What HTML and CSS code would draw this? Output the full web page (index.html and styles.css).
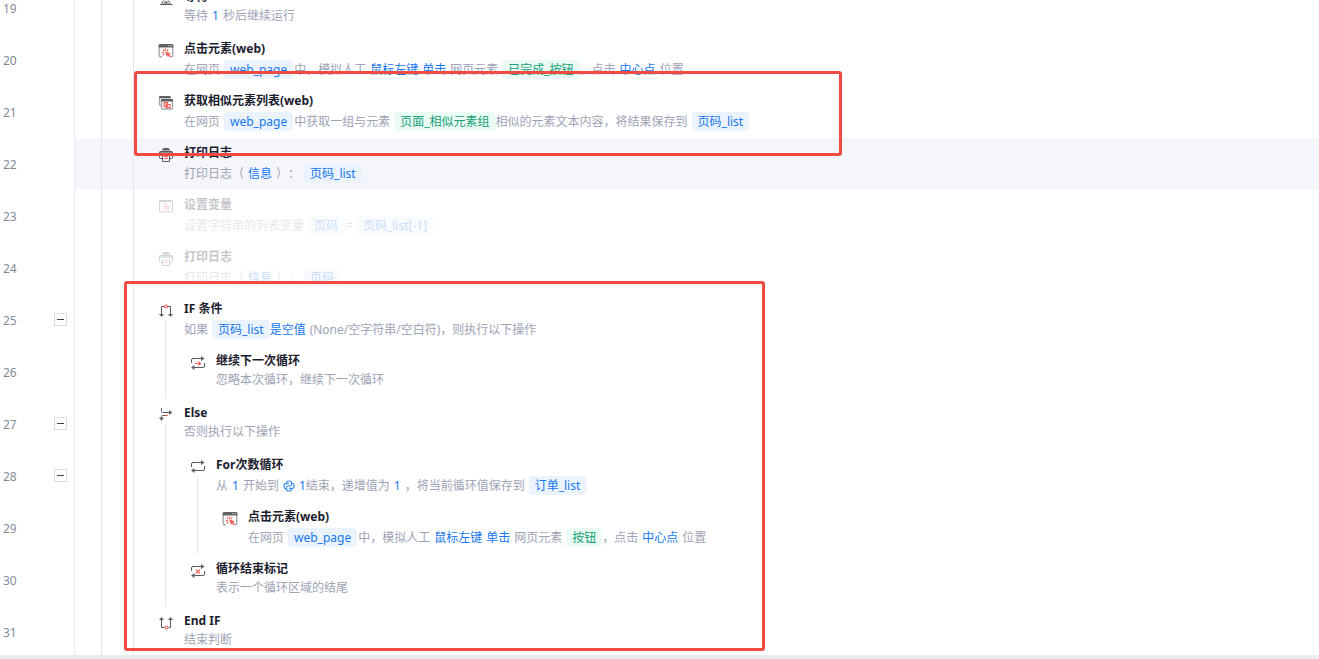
FILE: index.html
```html
<!DOCTYPE html>
<html lang="zh-CN">
<head>
<meta charset="utf-8">
<meta name="viewport" content="width=device-width, initial-scale=1">
<title>流程编辑器</title>
<link rel="stylesheet" href="styles.css">
</head>
<body>
<svg class="sprite" aria-hidden="true">
  <symbol id="i-wait" viewBox="0 0 16 16">
    <path class="k" d="M2 2.500H14M2 13.500H14.500M4 3C4 6 7 7 7 8C7 9 4 10 4 13M12 3C12 6 9 7 9 8C9 9 12 10 12 13"/>
    <path class="kf" d="M5 12.500L8 10L11 12.500Z"/>
  </symbol>
  <symbol id="i-click" viewBox="0 0 16 16">
    <path class="g" d="M1.200 4V12.500Q1.200 13.800 2.500 13.800H4M14.800 4V12.500Q14.800 13.800 13.500 13.800H13"/>
    <path class="kf" d="M2 1H14Q15.500 1 15.500 2.500V4.500H.5V2.500Q.5 1 2 1Z"/>
    <path class="w" d="M10.500 2.700H11.500M12.700 2.700H13.700"/>
    <path class="r" d="M7.500 5.500V7.500M4.800 6.500L6.300 8M4 9.500H6M4.800 12.200L6.300 10.800M10.300 6.500L8.900 8"/>
    <path class="rf" d="M7 8.300L12.800 10.200L11.200 11.200L13.200 13.200L12 14.400L10 12.500L9 14Z"/>
  </symbol>
  <symbol id="i-list" viewBox="0 0 16 16">
    <path class="g" d="M1.500 3V9.500Q1.500 10.500 3 10.500"/>
    <path class="kf" d="M2 1H11.500Q12.800 1 12.800 2.200V3.300H1V2.200Q1 1 2 1Z"/>
    <rect class="g" x="3.500" y="4.500" width="11" height="9.500" rx="1"/>
    <path class="kf" d="M4 4H14Q15 4 15 5V6.500H3V5Q3 4 4 4Z"/>
    <path class="r" d="M6 7.500H9.500V11.500H6ZM8 9.500H12V12.700H8ZM8 8V11"/>
  </symbol>
  <symbol id="i-print" viewBox="0 0 16 16">
    <path class="kf" d="M4 3.500Q4 1 6.500 1H9.500Q12 1 12 3.500Z"/>
    <path class="gf" d="M1 5.500Q1 4 2.500 4H13.500Q15 4 15 5.500V7H1Z"/>
    <path class="k" d="M4 11.500H2.500Q1.500 11.500 1.500 10.500V6Q1.500 4.500 3 4.500H13Q14.500 4.500 14.500 6V10.500Q14.500 11.500 13.500 11.500H12"/>
    <path class="k" d="M4.500 8V14.500H11.500V8"/>
    <path class="r" d="M6 9.500H10M6 11.500H10"/>
  </symbol>
  <symbol id="i-var" viewBox="0 0 16 16">
    <rect class="k" x="1.500" y="1.500" width="13" height="11.500" rx="1"/>
    <path class="k" d="M1.500 2.500H14.500"/>
    <path class="r" d="M9 4.800Q7.500 4.300 7.200 6L6.300 10Q6 11 5 10.700M5.500 7.300H8.500M8.500 7.500L11.500 10.500M11.500 7.500L8.500 10.500"/>
  </symbol>
  <symbol id="i-if" viewBox="0 0 16 16">
    <path class="k" d="M6 3.500H3.500V12M10 3.500H12.500V12"/>
    <path class="kf" d="M1 11H6L3.500 14ZM10 11H15L12.500 14Z"/>
    <circle class="r" cx="8" cy="3.500" r="1.500"/>
  </symbol>
  <symbol id="i-endif" viewBox="0 0 16 16">
    <path class="k" d="M6.500 12.500H3.500V4M10.500 12.500H12.500V4"/>
    <path class="kf" d="M1 5H6L3.500 2ZM10 5H15L12.500 2Z"/>
    <circle class="r" cx="8.500" cy="12.500" r="1.500"/>
  </symbol>
  <symbol id="i-else" viewBox="0 0 16 16">
    <path class="k" d="M3.500 1V4.500Q3.500 5.500 4.500 5.500H12M7 8.500H4.500Q3.500 8.500 3.500 9.500V11"/>
    <path class="kf" d="M11 3L14.500 5.500L11 8ZM1 10.500H6L3.500 14Z"/>
    <path class="r" d="M7 8.500H10"/>
  </symbol>
  <symbol id="i-loop" viewBox="0 0 16 16">
    <path class="k" d="M1.500 8V5Q1.500 3.500 3 3.500H12M14.500 7V10Q14.500 11.500 13 11.500H4"/>
    <path class="kf" d="M11 1L14.500 3.500L11 6ZM4.500 9L1 11.500L4.500 14Z"/>
  </symbol>
  <symbol id="i-next" viewBox="0 0 16 16">
    <path class="k" d="M1.500 8V5Q1.500 3.500 3 3.500H12M14.500 8V11Q14.500 12.500 13 12.500H4"/>
    <path class="kf" d="M11 1L14.500 3.500L11 6ZM4.500 10L1 12.500L4.500 15Z"/>
    <path class="r" d="M5 8.500H10M8.500 6.500L10.500 8.500L8.500 10.500"/>
  </symbol>
  <symbol id="i-endloop" viewBox="0 0 16 16">
    <path class="k" d="M1.500 8V5Q1.500 3.500 3 3.500H12M14.500 8V11Q14.500 12.500 13 12.500H4"/>
    <path class="kf" d="M11 1L14.500 3.500L11 6ZM4.500 10L1 12.500L4.500 15Z"/>
    <path class="r" d="M6 6.500L10 10.500M10 6.500L6 10.500"/>
  </symbol>
  <symbol id="i-py" viewBox="0 0 12 12">
    <path class="b" d="M3.500 4V2.500Q3.500 1 6 1Q8.500 1 8.500 2.500V4.500Q8.500 6 7 6H5Q3.500 6 3.500 7.500V8.500H2.500Q1 8.500 1 6Q1 3.700 2.500 3.700H6M8.500 3.500H9.500Q11 3.500 11 6Q11 8.300 9.500 8.300H6M8.500 8V9.500Q8.500 11 6 11Q3.500 11 3.500 9.500V7.500"/>
  </symbol>
</svg>

<main class="editor">
  <ol class="flow">
    <li class="row">
      <div class="gutter"><span class="num">19</span></div>
      <div class="step"><i class="guide"></i><i class="guide"></i>
        <div class="mark"><svg class="icon"><use href="#i-wait"/></svg></div>
        <div class="body"><h2 class="title">等待</h2>
          <p class="desc"><span>等待</span><b class="kw">1</b><span>秒后继续运行</span></p></div>
      </div>
    </li>
    <li class="row">
      <div class="gutter"><span class="num">20</span></div>
      <div class="step"><i class="guide"></i><i class="guide"></i>
        <div class="mark"><svg class="icon"><use href="#i-click"/></svg></div>
        <div class="body"><h2 class="title">点击元素(web)</h2>
          <p class="desc tall"><span>在网页</span><span class="chip">web_page</span><span>中，模拟人工</span><b class="kw">鼠标左键</b><b class="kw">单击</b><span>网页元素</span><span class="chip green">已完成_按钮</span><span>，点击</span><b class="kw">中心点</b><span>位置</span></p></div>
      </div>
    </li>
    <li class="row">
      <div class="gutter"><span class="num">21</span></div>
      <div class="step"><i class="guide"></i><i class="guide"></i>
        <div class="mark"><svg class="icon"><use href="#i-list"/></svg></div>
        <div class="body"><h2 class="title">获取相似元素列表(web)</h2>
          <p class="desc tall"><span>在网页</span><span class="chip">web_page</span><span>中获取一组与元素</span><span class="chip green">页面_相似元素组</span><span>相似的元素文本内容，将结果保存到</span><span class="chip">页码_list</span></p></div>
      </div>
    </li>
    <li class="row current">
      <div class="gutter"><span class="num">22</span></div>
      <div class="step"><i class="guide"></i><i class="guide"></i>
        <div class="mark"><svg class="icon"><use href="#i-print"/></svg></div>
        <div class="body"><h2 class="title">打印日志</h2>
          <p class="desc tall"><span>打印日志（</span><b class="kw">信息</b><span>）：</span><span class="chip">页码_list</span></p></div>
      </div>
    </li>
    <li class="row disabled">
      <div class="gutter"><span class="num">23</span></div>
      <div class="step"><i class="guide"></i><i class="guide"></i>
        <div class="mark"><svg class="icon"><use href="#i-var"/></svg></div>
        <div class="body"><h2 class="title">设置变量</h2>
          <p class="desc tall"><span>设置字符串的列表变量</span><span class="chip">页码</span><span class="op">=</span><span class="chip">页码_list[-1]</span></p></div>
      </div>
    </li>
    <li class="row disabled">
      <div class="gutter"><span class="num">24</span></div>
      <div class="step"><i class="guide"></i><i class="guide"></i>
        <div class="mark"><svg class="icon"><use href="#i-print"/></svg></div>
        <div class="body"><h2 class="title">打印日志</h2>
          <p class="desc tall"><span>打印日志（</span><b class="kw">信息</b><span>）：</span><span class="chip">页码</span></p></div>
      </div>
    </li>
    <li class="row">
      <div class="gutter"><span class="num">25</span><button class="fold" type="button" aria-label="折叠第25行"></button></div>
      <div class="step"><i class="guide"></i><i class="guide"></i>
        <div class="mark stem"><svg class="icon"><use href="#i-if"/></svg></div>
        <div class="body"><h2 class="title">IF 条件</h2>
          <p class="desc tall"><span>如果</span><span class="chip">页码_list</span><b class="kw">是空值</b><span>(None/空字符串/空白符)，则执行以下操作</span></p></div>
      </div>
    </li>
    <li class="row">
      <div class="gutter"><span class="num">26</span></div>
      <div class="step"><i class="guide"></i><i class="guide"></i><i class="guide"></i>
        <div class="mark"><svg class="icon"><use href="#i-next"/></svg></div>
        <div class="body"><h2 class="title">继续下一次循环</h2>
          <p class="desc"><span>忽略本次循环，继续下一次循环</span></p></div>
      </div>
    </li>
    <li class="row">
      <div class="gutter"><span class="num">27</span><button class="fold" type="button" aria-label="折叠第27行"></button></div>
      <div class="step"><i class="guide"></i><i class="guide"></i>
        <div class="mark stem"><svg class="icon"><use href="#i-else"/></svg></div>
        <div class="body"><h2 class="title">Else</h2>
          <p class="desc"><span>否则执行以下操作</span></p></div>
      </div>
    </li>
    <li class="row">
      <div class="gutter"><span class="num">28</span><button class="fold" type="button" aria-label="折叠第28行"></button></div>
      <div class="step"><i class="guide"></i><i class="guide"></i><i class="guide"></i>
        <div class="mark stem"><svg class="icon"><use href="#i-loop"/></svg></div>
        <div class="body"><h2 class="title">For次数循环</h2>
          <p class="desc tall"><span>从</span><b class="kw">1</b><span>开始到</span><svg class="py"><use href="#i-py"/></svg><b class="kw tight">1</b><span>结束，递增值为</span><b class="kw">1</b><span>，将当前循环值保存到</span><span class="chip">订单_list</span></p></div>
      </div>
    </li>
    <li class="row">
      <div class="gutter"><span class="num">29</span></div>
      <div class="step"><i class="guide"></i><i class="guide"></i><i class="guide"></i><i class="guide"></i>
        <div class="mark"><svg class="icon"><use href="#i-click"/></svg></div>
        <div class="body"><h2 class="title">点击元素(web)</h2>
          <p class="desc tall"><span>在网页</span><span class="chip">web_page</span><span>中，模拟人工</span><b class="kw">鼠标左键</b><b class="kw">单击</b><span>网页元素</span><span class="chip green">按钮</span><span>，点击</span><b class="kw">中心点</b><span>位置</span></p></div>
      </div>
    </li>
    <li class="row">
      <div class="gutter"><span class="num">30</span></div>
      <div class="step"><i class="guide"></i><i class="guide"></i><i class="guide"></i>
        <div class="mark"><svg class="icon"><use href="#i-endloop"/></svg></div>
        <div class="body"><h2 class="title">循环结束标记</h2>
          <p class="desc"><span>表示一个循环区域的结尾</span></p></div>
      </div>
    </li>
    <li class="row">
      <div class="gutter"><span class="num">31</span></div>
      <div class="step"><i class="guide"></i><i class="guide"></i>
        <div class="mark"><svg class="icon"><use href="#i-endif"/></svg></div>
        <div class="body"><h2 class="title">End IF</h2>
          <p class="desc"><span>结束判断</span></p></div>
      </div>
    </li>
  </ol>
  <div class="callout callout-list"></div>
  <div class="callout callout-branch"></div>
</main>
<footer class="edge"></footer>
</body>
</html>
```
FILE: styles.css
```css
* { box-sizing: border-box; }

body {
  margin: 0;
  height: 100vh;
  display: flex;
  flex-direction: column;
  overflow: hidden;
  background: #fff;
  color: #9ea3b5;
  font: 12px/18px "Noto Sans", "Noto Sans CJK SC", sans-serif;
  text-spacing-trim: space-all;
}

.sprite { display: none; }

.editor {
  position: relative;
  flex: 1;
  min-height: 0;
  overflow: hidden;
}

.edge {
  flex: none;
  height: 4px;
  background: #ebecf1;
}

/* The list is scrolled part-way into its first row. */
.flow {
  list-style: none;
  margin: -18px 0 0;
  padding: 0;
}

.row {
  display: flex;
  height: 52px;
}

.gutter {
  flex: none;
  width: 75px;
  display: flex;
  align-items: flex-start;
  justify-content: space-between;
  padding: 18px 7px 0 3px;
  border-right: 1px solid #ebebed;
  color: #838b99;
}

.fold {
  width: 13px;
  height: 13px;
  margin-top: 1px;
  padding: 0;
  display: grid;
  place-items: center;
  background: #fff;
  border: 1px solid #dcdcde;
}

.fold::before {
  content: "";
  width: 7px;
  height: 1px;
  background: #444;
}

.step {
  flex: 1;
  min-width: 0;
  display: flex;
  padding-left: 19px;
}

.current .step { background: #f5f6fb; }

.guide {
  flex: none;
  width: 32px;
  padding-left: 7px;
}

.guide::before,
.stem::after {
  content: "";
  display: block;
  width: 1px;
  height: 100%;
  background: #e6e6e8;
}

.mark {
  flex: none;
  width: 16px;
  padding-top: 9px;
  display: flex;
  flex-direction: column;
}

.stem::after {
  flex: 1;
  margin: 1px 0 0 7px;
}

.icon {
  flex: none;
  width: 16px;
  height: 16px;
}

.body {
  padding: 5px 0 0 10px;
  white-space: nowrap;
}

.title {
  margin: 0;
  font-size: 12px;
  line-height: 20px;
  font-weight: 700;
  color: #1b202e;
}

.desc {
  margin: 0;
  display: flex;
  align-items: center;
}

.tall { height: 22px; }

.kw {
  margin: 0 4px;
  font-weight: 400;
  color: #1677f2;
}

.kw + .kw,
.chip + .kw { margin-left: 0; }

.kw.tight { margin-right: 0; }

.chip {
  height: 19px;
  line-height: 19px;
  margin: 0 1px 2px 4px;
  padding: 0 6px;
  border-radius: 4px;
  background: #ebf3ff;
  color: #1677f2;
}

.green {
  margin-right: 0;
  background: #eafbf4;
  color: #169f78;
}

.chip:has(+ .kw),
.chip:has(+ .op) { margin-right: 0; }

.op { margin-left: 2px; }

.py {
  width: 12px;
  height: 12px;
  margin-left: 4px;
}

.disabled .mark,
.disabled .body { opacity: 0.25; }

.k, .g, .r, .w, .b { fill: none; stroke-width: 1; }
.k { stroke: #5a5a60; }
.g { stroke: #a8a8ac; stroke-width: 1.4; }
.r { stroke: #f5635f; stroke-width: 1.2; }
.w { stroke: #fff; }
.b { stroke: #3a8df5; stroke-width: 1.2; }
.kf { fill: #606066; }
.gf { fill: #8e8e93; }
.rf { fill: #f5635f; }

/* Red annotation frames drawn over the list */
.callout {
  position: absolute;
  border: 3px solid #f04b40;
  border-radius: 3px;
  pointer-events: none;
}

.callout-list {
  left: 134px;
  top: 71px;
  width: 708px;
  height: 85px;
}

.callout-branch {
  left: 124px;
  top: 281px;
  width: 641px;
  height: 370px;
}
```
